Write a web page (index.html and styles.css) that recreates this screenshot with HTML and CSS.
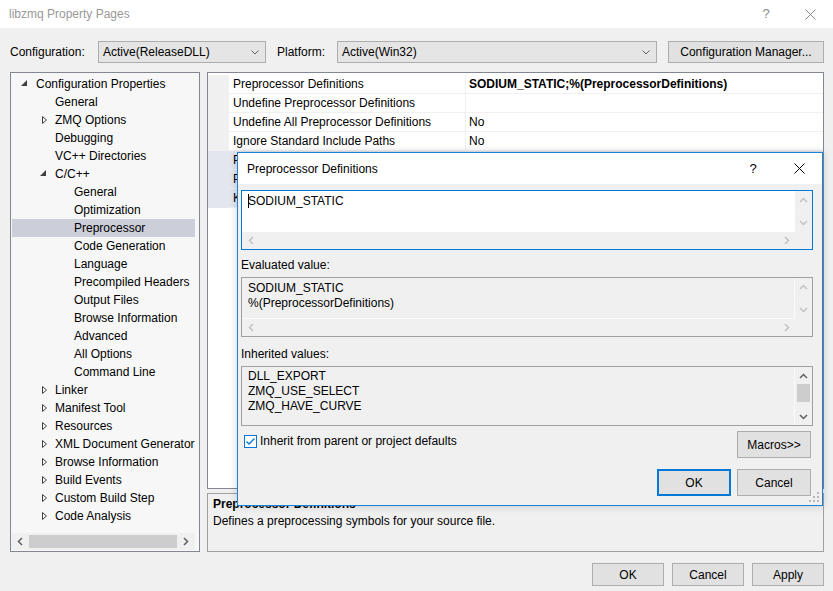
FILE: index.html
```html
<!DOCTYPE html>
<html>
<head>
<meta charset="utf-8">
<title>libzmq Property Pages</title>
<link rel="stylesheet" href="styles.css">
</head>
<body>
<div class="window">
  <header class="titlebar">
    <span class="title">libzmq Property Pages</span>
    <span class="cap cap-help">?</span>
    <span class="cap cap-close"><svg width="11" height="11" viewBox="0 0 11 11"><path d="M0.5 0.5L10.5 10.5M10.5 0.5L0.5 10.5" stroke="#8a8a8a" stroke-width="1" fill="none"/></svg></span>
  </header>

  <div class="config-row">
    <span class="cfg-label lbl-config">Configuration:</span>
    <div class="combo combo-config"><span>Active(ReleaseDLL)</span><svg class="chev" width="8" height="5" viewBox="0 0 8 5"><path d="M0.5 0.5L4 4L7.5 0.5" fill="none" stroke="#606060"/></svg></div>
    <span class="cfg-label lbl-platform">Platform:</span>
    <div class="combo combo-platform"><span>Active(Win32)</span><svg class="chev" width="8" height="5" viewBox="0 0 8 5"><path d="M0.5 0.5L4 4L7.5 0.5" fill="none" stroke="#606060"/></svg></div>
    <button class="btn btn-cfgmgr">Configuration Manager...</button>
  </div>

  <div class="main">
    <nav class="tree">
      <ul class="tree-list">
        <li class="node l0"><span class="tog"><svg class="exp" width="6" height="6" viewBox="0 0 6 6"><path d="M6 0L6 6L0 6Z" fill="#404040"/></svg></span>Configuration Properties</li>
        <li class="node l1"><span class="tog"></span>General</li>
        <li class="node l1"><span class="tog"><svg class="col" width="5" height="8" viewBox="0 0 5 8"><path d="M0.5 0.5L4.5 4L0.5 7.5Z" fill="none" stroke="#404040"/></svg></span>ZMQ Options</li>
        <li class="node l1"><span class="tog"></span>Debugging</li>
        <li class="node l1"><span class="tog"></span>VC++ Directories</li>
        <li class="node l1"><span class="tog"><svg class="exp" width="6" height="6" viewBox="0 0 6 6"><path d="M6 0L6 6L0 6Z" fill="#404040"/></svg></span>C/C++</li>
        <li class="node l2"><span class="tog"></span>General</li>
        <li class="node l2"><span class="tog"></span>Optimization</li>
        <li class="node l2 selected"><span class="tog"></span>Preprocessor</li>
        <li class="node l2"><span class="tog"></span>Code Generation</li>
        <li class="node l2"><span class="tog"></span>Language</li>
        <li class="node l2"><span class="tog"></span>Precompiled Headers</li>
        <li class="node l2"><span class="tog"></span>Output Files</li>
        <li class="node l2"><span class="tog"></span>Browse Information</li>
        <li class="node l2"><span class="tog"></span>Advanced</li>
        <li class="node l2"><span class="tog"></span>All Options</li>
        <li class="node l2"><span class="tog"></span>Command Line</li>
        <li class="node l1"><span class="tog"><svg class="col" width="5" height="8" viewBox="0 0 5 8"><path d="M0.5 0.5L4.5 4L0.5 7.5Z" fill="none" stroke="#404040"/></svg></span>Linker</li>
        <li class="node l1"><span class="tog"><svg class="col" width="5" height="8" viewBox="0 0 5 8"><path d="M0.5 0.5L4.5 4L0.5 7.5Z" fill="none" stroke="#404040"/></svg></span>Manifest Tool</li>
        <li class="node l1"><span class="tog"><svg class="col" width="5" height="8" viewBox="0 0 5 8"><path d="M0.5 0.5L4.5 4L0.5 7.5Z" fill="none" stroke="#404040"/></svg></span>Resources</li>
        <li class="node l1"><span class="tog"><svg class="col" width="5" height="8" viewBox="0 0 5 8"><path d="M0.5 0.5L4.5 4L0.5 7.5Z" fill="none" stroke="#404040"/></svg></span>XML Document Generator</li>
        <li class="node l1"><span class="tog"><svg class="col" width="5" height="8" viewBox="0 0 5 8"><path d="M0.5 0.5L4.5 4L0.5 7.5Z" fill="none" stroke="#404040"/></svg></span>Browse Information</li>
        <li class="node l1"><span class="tog"><svg class="col" width="5" height="8" viewBox="0 0 5 8"><path d="M0.5 0.5L4.5 4L0.5 7.5Z" fill="none" stroke="#404040"/></svg></span>Build Events</li>
        <li class="node l1"><span class="tog"><svg class="col" width="5" height="8" viewBox="0 0 5 8"><path d="M0.5 0.5L4.5 4L0.5 7.5Z" fill="none" stroke="#404040"/></svg></span>Custom Build Step</li>
        <li class="node l1"><span class="tog"><svg class="col" width="5" height="8" viewBox="0 0 5 8"><path d="M0.5 0.5L4.5 4L0.5 7.5Z" fill="none" stroke="#404040"/></svg></span>Code Analysis</li>
      </ul>
      <div class="tree-hscroll">
        <span class="arrow-cell"><svg width="6" height="9" viewBox="0 0 6 9"><path d="M5 1L1.5 4.5L5 8" fill="none" stroke="#606060" stroke-width="1.5"/></svg></span>
        <span class="thumb-h"></span>
        <span class="arrow-cell"><svg width="6" height="9" viewBox="0 0 6 9"><path d="M1 1L4.5 4.5L1 8" fill="none" stroke="#606060" stroke-width="1.5"/></svg></span>
      </div>
    </nav>

    <section class="right">
      <div class="grid">
        <div class="prow"><span class="pmargin"></span><span class="pname">Preprocessor Definitions</span><span class="pval bold">SODIUM_STATIC;%(PreprocessorDefinitions)</span></div>
        <div class="prow"><span class="pmargin"></span><span class="pname">Undefine Preprocessor Definitions</span><span class="pval"></span></div>
        <div class="prow"><span class="pmargin"></span><span class="pname">Undefine All Preprocessor Definitions</span><span class="pval">No</span></div>
        <div class="prow"><span class="pmargin"></span><span class="pname">Ignore Standard Include Paths</span><span class="pval">No</span></div>
        <div class="prow shaded"><span class="pmargin"></span><span class="pname short">Preprocess to a File</span><span class="pval"></span></div>
        <div class="prow shaded"><span class="pmargin"></span><span class="pname short">Preprocess Suppress Line Numbers</span><span class="pval"></span></div>
        <div class="prow shaded"><span class="pmargin"></span><span class="pname short">Keep Comments</span><span class="pval"></span></div>
      </div>
      <div class="desc">
        <div class="desc-title">Preprocessor Definitions</div>
        <div class="desc-text">Defines a preprocessing symbols for your source file.</div>
      </div>
    </section>
  </div>

  <footer class="footer">
    <button class="btn fbtn">OK</button>
    <button class="btn fbtn">Cancel</button>
    <button class="btn fbtn">Apply</button>
  </footer>

  <div class="dialog">
    <div class="dlg-title">
      <span class="dlg-title-text">Preprocessor Definitions</span>
      <span class="dlg-cap dlg-help">?</span>
      <span class="dlg-cap"><svg width="11" height="11" viewBox="0 0 11 11"><path d="M0.5 0.5L10.5 10.5M10.5 0.5L0.5 10.5" stroke="#000" stroke-width="1" fill="none"/></svg></span>
    </div>
    <div class="dlg-body">
      <div class="ebox ebox-edit">
        <div class="etext etext-edit"><span class="caret"></span>SODIUM_STATIC</div>
        <div class="vscroll dis">
          <svg width="9" height="6" viewBox="0 0 9 6"><path d="M1 5L4.5 1.5L8 5" fill="none" stroke="currentColor" stroke-width="1.5"/></svg>
          <svg width="9" height="6" viewBox="0 0 9 6"><path d="M1 1L4.5 4.5L8 1" fill="none" stroke="currentColor" stroke-width="1.5"/></svg>
        </div>
        <div class="hscroll dis">
          <span class="harrow"><svg width="6" height="9" viewBox="0 0 6 9"><path d="M5 1L1.5 4.5L5 8" fill="none" stroke="currentColor" stroke-width="1.5"/></svg></span>
          <span class="harrow"><svg width="6" height="9" viewBox="0 0 6 9"><path d="M1 1L4.5 4.5L1 8" fill="none" stroke="currentColor" stroke-width="1.5"/></svg></span>
        </div>
        <div class="corner"></div>
      </div>

      <div class="dlg-label lbl-eval">Evaluated value:</div>
      <div class="ebox ebox-ro">
        <div class="etext etext-ro">SODIUM_STATIC<br>%(PreprocessorDefinitions)</div>
        <div class="vscroll dis">
          <svg width="9" height="6" viewBox="0 0 9 6"><path d="M1 5L4.5 1.5L8 5" fill="none" stroke="currentColor" stroke-width="1.5"/></svg>
          <svg width="9" height="6" viewBox="0 0 9 6"><path d="M1 1L4.5 4.5L8 1" fill="none" stroke="currentColor" stroke-width="1.5"/></svg>
        </div>
        <div class="hscroll dis">
          <span class="harrow"><svg width="6" height="9" viewBox="0 0 6 9"><path d="M5 1L1.5 4.5L5 8" fill="none" stroke="currentColor" stroke-width="1.5"/></svg></span>
          <span class="harrow"><svg width="6" height="9" viewBox="0 0 6 9"><path d="M1 1L4.5 4.5L1 8" fill="none" stroke="currentColor" stroke-width="1.5"/></svg></span>
        </div>
        <div class="corner"></div>
      </div>

      <div class="dlg-label lbl-inh">Inherited values:</div>
      <div class="ebox ebox-list">
        <div class="etext etext-list">DLL_EXPORT<br>ZMQ_USE_SELECT<br>ZMQ_HAVE_CURVE</div>
        <div class="vscroll-list">
          <span class="varrow"><svg width="9" height="6" viewBox="0 0 9 6"><path d="M1 5L4.5 1.5L8 5" fill="none" stroke="#606060" stroke-width="1.5"/></svg></span>
          <span class="thumb-v"></span>
          <span class="vspace"></span>
          <span class="varrow"><svg width="9" height="6" viewBox="0 0 9 6"><path d="M1 1L4.5 4.5L8 1" fill="none" stroke="#606060" stroke-width="1.5"/></svg></span>
        </div>
      </div>

      <div class="opt-row">
        <label class="check">
          <svg width="13" height="13" viewBox="0 0 13 13"><rect x="0.5" y="0.5" width="12" height="12" fill="#fff" stroke="#0078d7"/><path d="M2.5 6.5L5 9L10.5 3.5" fill="none" stroke="#0078d7" stroke-width="1.3"/></svg>
          <span>Inherit from parent or project defaults</span>
        </label>
        <button class="btn dbtn">Macros&gt;&gt;</button>
      </div>

      <div class="ok-row">
        <button class="btn dbtn default">OK</button>
        <button class="btn dbtn">Cancel</button>
      </div>
    </div>
    <svg class="grip" width="11" height="11" viewBox="0 0 11 11">
      <rect x="8" y="0" width="2" height="2" fill="#b8b8b8"/>
      <rect x="4" y="4" width="2" height="2" fill="#b8b8b8"/><rect x="8" y="4" width="2" height="2" fill="#b8b8b8"/>
      <rect x="0" y="8" width="2" height="2" fill="#b8b8b8"/><rect x="4" y="8" width="2" height="2" fill="#b8b8b8"/><rect x="8" y="8" width="2" height="2" fill="#b8b8b8"/>
    </svg>
  </div>
</div>
</body>
</html>
```

FILE: styles.css
```css
* { box-sizing: border-box; }

body {
  margin: 0;
  background: #f0f0f0;
  font-family: "Liberation Sans", Arial, sans-serif;
  font-size: 12px;
  line-height: 16px;
  color: #000;
}

.window {
  width: 833px;
  height: 591px;
  position: relative;
  overflow: hidden;
  display: flex;
  flex-direction: column;
}

/* title bar */
.titlebar {
  height: 28px;
  flex: none;
  background: #fff;
  display: flex;
  align-items: center;
  padding-left: 9px;
}
.title { flex: 1; color: #999; }
.cap {
  height: 28px;
  display: flex;
  align-items: center;
  justify-content: center;
  color: #888;
  font-size: 13px;
}
.cap-help { width: 42px; }
.cap-close { width: 46px; }

/* configuration row */
.config-row {
  height: 44px;
  flex: none;
  display: flex;
  align-items: center;
  padding: 13px 0 9px 10px;
}
.cfg-label { flex: none; }
.lbl-config { width: 88px; }
.lbl-platform { width: 60px; margin-left: 11px; }
.combo {
  flex: none;
  height: 22px;
  border: 1px solid #adadad;
  background: #e5e5e5;
  display: flex;
  align-items: center;
  justify-content: space-between;
  padding: 0 6px 0 4px;
}
.combo-config { width: 168px; }
.combo-platform { width: 320px; }
.chev { display: block; }

.btn {
  font-family: "Liberation Sans", Arial, sans-serif;
  font-size: 12px;
  color: #000;
  background: #e1e1e1;
  border: 1px solid #adadad;
  padding: 0;
  margin: 0;
}
.btn-cfgmgr {
  width: 156px;
  height: 22px;
  margin-left: 11px;
}

/* main */
.main {
  height: 480px;
  flex: none;
  display: flex;
  gap: 7px;
  padding-left: 10px;
}

.tree {
  width: 190px;
  height: 480px;
  border: 1px solid #828790;
  background: #f7f7f7;
  display: flex;
  flex-direction: column;
  padding-bottom: 1px;
}
.tree-list {
  list-style: none;
  margin: 0;
  padding: 2px 4px 0 1px;
  flex: 1;
}
.node {
  height: 18px;
  display: flex;
  align-items: center;
  white-space: nowrap;
}
.l0 { padding-left: 7px; }
.l1 { padding-left: 26px; }
.l2 { padding-left: 45px; }
.tog {
  width: 17px;
  flex: none;
  display: flex;
  align-items: center;
}
.tog .exp { margin-left: 2px; margin-top: -2px; }
.tog .col { margin-left: 4px; }
.node.selected { background: #ccced9; }

.tree-hscroll {
  height: 17px;
  flex: none;
  margin-right: 4px;
  display: flex;
  align-items: center;
  background: #f0f0f0;
}
.arrow-cell {
  width: 18px;
  height: 17px;
  display: flex;
  align-items: center;
  justify-content: center;
}
.thumb-h {
  flex: 1;
  height: 13px;
  background: #cdcdcd;
}

.right {
  width: 617px;
  display: flex;
  flex-direction: column;
  gap: 4px;
}
.grid {
  height: 417px;
  border: 1px solid #828790;
  background: #fff;
  padding-top: 2px;
}
.prow {
  height: 19px;
  display: flex;
  line-height: 18px;
  white-space: nowrap;
}
.pmargin { width: 21px; flex: none; background: #f0f0f0; }
.pname {
  width: 237px;
  flex: none;
  padding-left: 4px;
  border-right: 1px solid #f0f0f0;
  border-bottom: 1px solid #f0f0f0;
  overflow: hidden;
}
.pval {
  flex: 1;
  padding-left: 3px;
  border-bottom: 1px solid #f0f0f0;
}
.bold { font-weight: bold; }
.prow.shaded .pmargin,
.prow.shaded .pname,
.prow.shaded .pval { background: #e3e6ee; }

.desc {
  height: 59px;
  border: 1px solid #a0a0a0;
  background: #f0f0f0;
  padding: 2px 5px 0;
  line-height: 17px;
}
.desc-title { font-weight: bold; }

/* footer */
.footer {
  flex: none;
  display: flex;
  justify-content: flex-end;
  gap: 8px;
  padding: 11px 9px 0 0;
}
.fbtn { width: 72px; height: 23px; }

/* dialog */
.dialog {
  position: absolute;
  left: 237px;
  top: 152px;
  width: 586px;
  height: 354px;
  border: 1px solid #1883d7;
  background: #f0f0f0;
  box-shadow: 0 0 8px rgba(0, 0, 0, 0.18);
  display: flex;
  flex-direction: column;
}
.dlg-title {
  height: 31px;
  flex: none;
  background: #fff;
  display: flex;
  align-items: center;
  padding-left: 9px;
}
.dlg-title-text { flex: 1; }
.dlg-cap {
  width: 46px;
  height: 31px;
  display: flex;
  align-items: center;
  justify-content: center;
}
.dlg-help { font-size: 13px; }

.dlg-body {
  display: flex;
  flex-direction: column;
  padding: 6px 9px 0 3px;
}

.ebox {
  height: 60px;
  display: grid;
  grid-template-columns: 1fr 17px;
  grid-template-rows: 1fr 17px;
  border: 1px solid #a0a0a0;
  background: #f0f0f0;
}
.ebox-edit { border-color: #0078d7; }
.ebox-list { grid-template-rows: 1fr; }

.etext {
  padding: 1px 6px;
  line-height: 15px;
  white-space: nowrap;
}
.etext-edit { background: #fff; padding-top: 3px; }
.etext-ro {
  padding-top: 3px;
  border-right: 1px solid #fbfbfb;
  border-bottom: 1px solid #fbfbfb;
}
.etext-list {
  padding-top: 2px;
  border-right: 1px solid #fbfbfb;
}
.caret {
  display: inline-block;
  width: 1px;
  height: 14px;
  background: #000;
  margin-right: -1px;
  vertical-align: -3px;
}

.vscroll {
  display: flex;
  flex-direction: column;
  justify-content: space-between;
  align-items: center;
  padding: 6px 0 6px;
}
.dis { color: #c2c2c2; }
.hscroll {
  display: flex;
  justify-content: space-between;
  align-items: center;
}
.harrow {
  width: 17px;
  height: 17px;
  display: flex;
  align-items: center;
  justify-content: center;
}
.corner { background: #f0f0f0; }

.vscroll-list {
  display: flex;
  flex-direction: column;
  align-items: center;
}
.varrow {
  width: 17px;
  height: 17px;
  flex: none;
  display: flex;
  align-items: center;
  justify-content: center;
}
.thumb-v {
  width: 13px;
  height: 18px;
  flex: none;
  background: #cdcdcd;
}
.vspace { flex: 1; }

.dlg-label { line-height: 15px; }
.lbl-eval { margin: 8px 0 4px; }
.lbl-inh { margin: 10px 0 4px; }

.opt-row {
  display: flex;
  justify-content: space-between;
  align-items: flex-start;
  margin-top: 5px;
}
.check {
  display: flex;
  align-items: center;
  gap: 3px;
  height: 16px;
  margin-top: 2px;
  padding-left: 3px;
}
.check svg { display: block; }
.dbtn {
  width: 74px;
  height: 27px;
  margin-right: 2px;
}
.ok-row {
  display: flex;
  justify-content: flex-end;
  gap: 6px;
  margin-top: 11px;
}
.ok-row .dbtn:first-child { margin-right: 0; }
.dbtn.default { border: 2px solid #0078d7; }

.grip {
  position: absolute;
  right: 2px;
  bottom: 2px;
}
```
